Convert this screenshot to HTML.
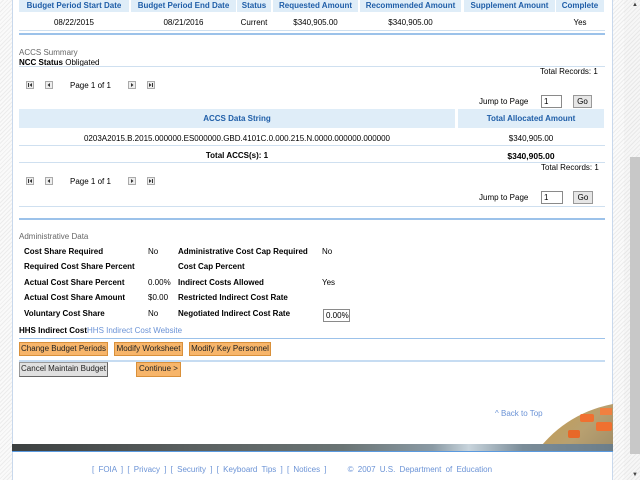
<!DOCTYPE html>
<html><head><meta charset="utf-8"><style>
*{margin:0;padding:0;box-sizing:border-box}
html,body{width:640px;height:480px;overflow:hidden}
body{font-family:"Liberation Sans",Verdana,sans-serif;font-size:8px;color:#000}
#wrap{position:relative;width:640px;height:480px;overflow:hidden;background:repeating-linear-gradient(135deg,#fafafa 0 2px,#ececec 2px 3px)}
.a{position:absolute;white-space:nowrap}
#main{position:absolute;left:12px;top:0;width:601px;height:480px;background:#fff;border-left:1px solid #c8d8ec;border-right:1px solid #c8d8ec}
.th{position:absolute;background:#dfedf8;color:#1f5ea8;font-weight:bold;text-align:center;line-height:12px}
.c{text-align:center}
.hl{position:absolute;height:1px;background:#cfe0f0}
.bl{position:absolute;height:2px;background:#9cc2ea}
.pg{position:absolute;width:8px;height:8px}
.inp{position:absolute;border:1px solid #8a8a8a;background:#fff;padding-left:2px;line-height:11px}
.btn{position:absolute;border:1px solid #999;background:#e6e6e6;text-align:center;line-height:12px}
.ob{position:absolute;background:#f7b56a;border:1px solid #d9903a;text-align:center;line-height:12px;color:#222}
.gb{position:absolute;background:#e0e0e0;border:1px solid #999;border-right-color:#666;border-bottom-color:#666;text-align:center;line-height:12px;color:#222}
b{font-weight:bold}
.lnk{color:#6b93d6}
</style></head><body><div id="wrap">
<div id="main"></div>
<div class="th" style="left:19px;top:0;width:110px;height:12px">Budget Period Start Date</div>
<div class="th" style="left:131px;top:0;width:105px;height:12px">Budget Period End Date</div>
<div class="th" style="left:237px;top:0;width:34px;height:12px">Status</div>
<div class="th" style="left:273px;top:0;width:85px;height:12px">Requested Amount</div>
<div class="th" style="left:360px;top:0;width:101px;height:12px">Recommended Amount</div>
<div class="th" style="left:464px;top:0;width:91px;height:12px">Supplement Amount</div>
<div class="th" style="left:556px;top:0;width:48px;height:12px">Complete</div>
<div class="a c" style="left:19px;top:18px;width:110px">08/22/2015</div>
<div class="a c" style="left:131px;top:18px;width:105px">08/21/2016</div>
<div class="a c" style="left:237px;top:18px;width:34px">Current</div>
<div class="a c" style="left:273px;top:18px;width:85px">$340,905.00</div>
<div class="a c" style="left:360px;top:18px;width:101px">$340,905.00</div>
<div class="a c" style="left:556px;top:18px;width:48px">Yes</div>
<div class="hl" style="left:19px;top:30px;width:586px"></div>
<div class="bl" style="left:19px;top:33px;width:586px"></div>
<div class="a" style="left:19px;top:48px;color:#666">ACCS Summary</div>
<div class="a" style="left:19px;top:58px"><b>NCC Status</b> Obligated</div>
<div class="hl" style="left:19px;top:66px;width:586px"></div>
<div class="a" style="left:540px;top:67px">Total Records: 1</div>

<svg class="pg" style="left:26px;top:81px" viewBox="0 0 8 8"><rect x=".5" y=".5" width="7" height="7" fill="#eee" stroke="#aaa"/><rect x="2" y="2" width="1" height="4" fill="#333"/><path d="M6 2L3.5 4 6 6z" fill="#333"/></svg>
<svg class="pg" style="left:45px;top:81px" viewBox="0 0 8 8"><rect x=".5" y=".5" width="7" height="7" fill="#eee" stroke="#aaa"/><path d="M5 2L2.5 4 5 6z" fill="#333"/></svg>
<div class="a" style="left:70px;top:81px">Page 1 of 1</div>
<svg class="pg" style="left:128px;top:81px" viewBox="0 0 8 8"><rect x=".5" y=".5" width="7" height="7" fill="#eee" stroke="#aaa"/><path d="M3 2L5.5 4 3 6z" fill="#333"/></svg>
<svg class="pg" style="left:147px;top:81px" viewBox="0 0 8 8"><rect x=".5" y=".5" width="7" height="7" fill="#eee" stroke="#aaa"/><path d="M2 2L4.5 4 2 6z" fill="#333"/><rect x="5" y="2" width="1" height="4" fill="#333"/></svg>

<div class="a" style="left:479px;top:97px">Jump to Page</div>
<div class="inp" style="left:541px;top:95px;width:21px;height:13px">1</div>
<div class="btn" style="left:573px;top:95px;width:19px;height:13px">Go</div>
<div class="th" style="left:19px;top:109px;width:436px;height:19px;line-height:20px">ACCS Data String</div>
<div class="th" style="left:458px;top:109px;width:146px;height:19px;line-height:20px">Total Allocated Amount</div>
<div class="a c" style="left:19px;top:134px;width:436px">0203A2015.B.2015.000000.ES000000.GBD.4101C.0.000.215.N.0000.000000.000000</div>
<div class="a c" style="left:458px;top:134px;width:146px">$340,905.00</div>
<div class="hl" style="left:19px;top:145px;width:586px"></div>
<div class="a c" style="left:19px;top:151px;width:436px"><b>Total ACCS(s): 1</b></div>
<div class="a c" style="left:458px;top:151px;width:146px;font-size:8.5px"><b>$340,905.00</b></div>
<div class="hl" style="left:19px;top:162px;width:586px"></div>
<div class="a" style="left:541px;top:163px">Total Records: 1</div>

<svg class="pg" style="left:26px;top:177px" viewBox="0 0 8 8"><rect x=".5" y=".5" width="7" height="7" fill="#eee" stroke="#aaa"/><rect x="2" y="2" width="1" height="4" fill="#333"/><path d="M6 2L3.5 4 6 6z" fill="#333"/></svg>
<svg class="pg" style="left:45px;top:177px" viewBox="0 0 8 8"><rect x=".5" y=".5" width="7" height="7" fill="#eee" stroke="#aaa"/><path d="M5 2L2.5 4 5 6z" fill="#333"/></svg>
<div class="a" style="left:70px;top:177px">Page 1 of 1</div>
<svg class="pg" style="left:128px;top:177px" viewBox="0 0 8 8"><rect x=".5" y=".5" width="7" height="7" fill="#eee" stroke="#aaa"/><path d="M3 2L5.5 4 3 6z" fill="#333"/></svg>
<svg class="pg" style="left:147px;top:177px" viewBox="0 0 8 8"><rect x=".5" y=".5" width="7" height="7" fill="#eee" stroke="#aaa"/><path d="M2 2L4.5 4 2 6z" fill="#333"/><rect x="5" y="2" width="1" height="4" fill="#333"/></svg>

<div class="a" style="left:479px;top:193px">Jump to Page</div>
<div class="inp" style="left:541px;top:191px;width:22px;height:13px">1</div>
<div class="btn" style="left:573px;top:191px;width:20px;height:13px">Go</div>
<div class="hl" style="left:19px;top:206px;width:586px"></div>
<div class="bl" style="left:19px;top:218px;width:586px"></div>
<div class="a" style="left:19px;top:232px;color:#666">Administrative Data</div>
<div class="a" style="left:24px;top:247px"><b>Cost Share Required</b></div>
<div class="a" style="left:148px;top:247px">No</div>
<div class="a" style="left:178px;top:247px"><b>Administrative Cost Cap Required</b></div>
<div class="a" style="left:322px;top:247px">No</div>
<div class="a" style="left:24px;top:262px"><b>Required Cost Share Percent</b></div>
<div class="a" style="left:178px;top:262px"><b>Cost Cap Percent</b></div>
<div class="a" style="left:24px;top:278px"><b>Actual Cost Share Percent</b></div>
<div class="a" style="left:148px;top:278px">0.00%</div>
<div class="a" style="left:178px;top:278px"><b>Indirect Costs Allowed</b></div>
<div class="a" style="left:322px;top:278px">Yes</div>
<div class="a" style="left:24px;top:293px"><b>Actual Cost Share Amount</b></div>
<div class="a" style="left:148px;top:293px">$0.00</div>
<div class="a" style="left:178px;top:293px"><b>Restricted Indirect Cost Rate</b></div>
<div class="a" style="left:24px;top:309px"><b>Voluntary Cost Share</b></div>
<div class="a" style="left:148px;top:309px">No</div>
<div class="a" style="left:178px;top:309px"><b>Negotiated Indirect Cost Rate</b></div>
<div class="inp" style="left:323px;top:309px;width:27px;height:13px">0.00%</div>
<div class="a" style="left:19px;top:326px"><b>HHS Indirect Cost</b><span class="lnk">HHS Indirect Cost Website</span></div>
<div class="bl" style="left:19px;top:338px;width:586px;height:1px"></div>
<div class="ob" style="left:19px;top:342px;width:89px;height:14px">Change Budget Periods</div>
<div class="ob" style="left:114px;top:342px;width:69px;height:14px">Modify Worksheet</div>
<div class="ob" style="left:189px;top:342px;width:82px;height:14px">Modify Key Personnel</div>
<div class="bl" style="left:19px;top:360px;width:586px;height:2px;background:#c6dcf2"></div>
<div class="gb" style="left:19px;top:362px;width:89px;height:15px">Cancel Maintain Budget</div>
<div class="ob" style="left:136px;top:362px;width:45px;height:15px">Continue &gt;</div>
<div class="a lnk" style="left:495px;top:409px">^ Back to Top</div>
<div style="position:absolute;left:540px;top:404px;width:73px;height:40px;overflow:hidden">
<div style="position:absolute;left:-27px;top:-2px;width:244px;height:244px;border-radius:50%;background:linear-gradient(135deg,#d09a3a,#b8a070 20%,#8a7c60 40%);"></div>
<div style="position:absolute;left:40px;top:10px;width:14px;height:8px;background:#f07030;border-radius:2px"></div>
<div style="position:absolute;left:56px;top:18px;width:16px;height:9px;background:#f07030;border-radius:2px"></div>
<div style="position:absolute;left:28px;top:26px;width:12px;height:8px;background:#e86828;border-radius:2px"></div>
<div style="position:absolute;left:60px;top:4px;width:12px;height:7px;background:#f08040"></div>
</div>
<div style="position:absolute;left:12px;top:444px;width:601px;height:8px;background:linear-gradient(90deg,#3c4040,#5a6060 30%,#6a7474 55%,#8a9aa4 70%,#c8d4dc 76%,#7a8c98 85%,#6c7e8a);border-bottom:1px solid #5a9ae0"></div>
<div class="a" style="left:92px;top:465px;color:#6b93d6;word-spacing:2px">[ FOIA ] [ Privacy ] [ Security ] [ Keyboard Tips ] [ Notices ] &nbsp;&nbsp;&nbsp; © 2007 U.S. Department of Education</div>
<div style="position:absolute;left:624px;top:0;width:16px;height:480px;background:repeating-linear-gradient(135deg,#f6f6f6 0 2px,#e8e8e8 2px 3px)"></div>
<div style="position:absolute;left:630px;top:157px;width:10px;height:297px;background:#c8c8c8"></div>
<div class="a" style="left:632px;top:2px;font-size:6px;line-height:6px;color:#444">▲</div>
<div class="a" style="left:632px;top:472px;font-size:6px;line-height:6px;color:#444">▼</div>
</div></body></html>
